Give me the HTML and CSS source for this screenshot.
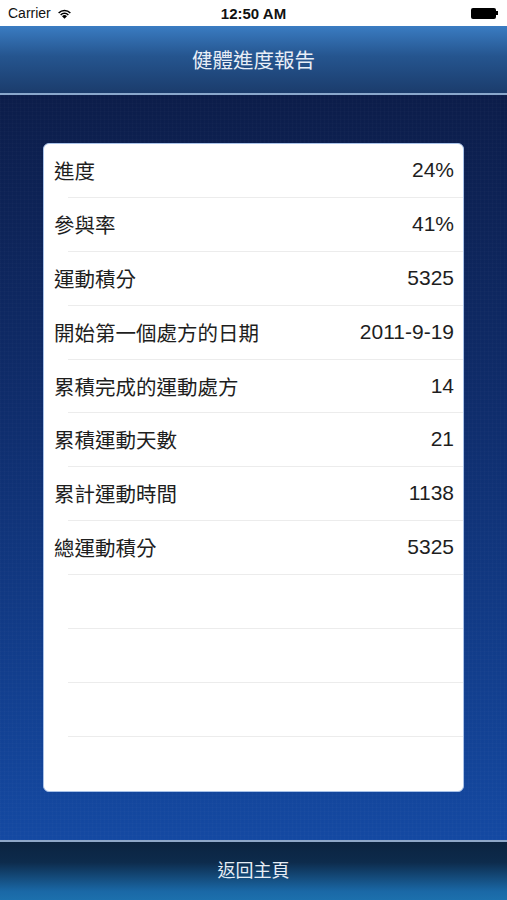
FILE: index.html
```html
<!DOCTYPE html>
<html>

<head>
  <meta name="viewport" content="width=device-width,initial-scale=1.0">
  <meta charset="utf-8">
  <title>健體進度報告</title>
  <link rel="stylesheet" href="styles.css">
</head>

<body>
  <!-- 狀態列 -->
  <div class="status">
    <div class="carrier">Carrier
      <svg class="wifi" width="15" height="11" viewBox="0 0 15 11">
        <path d="M7.5 10.8 L5 8.2 A3.6 3.6 0 0 1 10 8.2 Z" fill="#000" />
        <path d="M3.1 6.4 A6.2 6.2 0 0 1 11.9 6.4 L10.8 7.5 A4.6 4.6 0 0 0 4.2 7.5 Z" fill="#000" />
        <path d="M1.1 4.4 A9 9 0 0 1 13.9 4.4 L12.8 5.5 A7.4 7.4 0 0 0 2.2 5.5 Z" fill="#000" />
      </svg>
    </div>
    <div class="time">12:50 AM</div>
    <div class="battery"><span class="cell"></span><span class="nub"></span></div>
  </div>

  <div class="header">健體進度報告</div>

  <div class="main">
    <div class="card">
      <div class="row"><span>進度</span><span class="num">24%</span></div>
      <div class="row"><span>參與率</span><span class="num">41%</span></div>
      <div class="row"><span>運動積分</span><span class="num">5325</span></div>
      <div class="row"><span>開始第一個處方的日期</span><span class="num">2011-9-19</span></div>
      <div class="row"><span>累積完成的運動處方</span><span class="num">14</span></div>
      <div class="row"><span>累積運動天數</span><span class="num">21</span></div>
      <div class="row"><span>累計運動時間</span><span class="num">1138</span></div>
      <div class="row"><span>總運動積分</span><span class="num">5325</span></div>
      <div class="row"></div>
      <div class="row"></div>
      <div class="row"></div>
      <div class="row last"></div>
    </div>
  </div>

  <div class="footer">返回主頁</div>
</body>

</html>
```

FILE: styles.css
```css
* {
  box-sizing: border-box;
}

body {
  margin: 0;
  width: 507px;
  height: 900px;
  display: flex;
  flex-direction: column;
  font-family: "Liberation Sans", "Noto Sans CJK TC", sans-serif;
  overflow: hidden;
}

/* 狀態列 */
.status {
  height: 26px;
  background-color: #fff;
  display: flex;
  align-items: center;
  justify-content: space-between;
  padding: 0 9px 0 8px;
  position: relative;
}

.carrier {
  font-size: 14px;
  color: #111;
  display: flex;
  align-items: center;
  gap: 6px;
}

.time {
  position: absolute;
  left: 0;
  right: 0;
  text-align: center;
  font-size: 15px;
  font-weight: bold;
  color: #111;
}

.battery {
  display: flex;
  align-items: center;
}

.battery .cell {
  width: 25px;
  height: 11px;
  background-color: #000;
  border-radius: 2px;
}

.battery .nub {
  width: 2px;
  height: 4px;
  background-color: #000;
}

.header {
  height: 69px;
  background: linear-gradient(#3a7cc2, #25558f 45%, #1b3c6c);
  border-bottom: 2px solid #8aa8cc;
  color: #e8eef7;
  font-size: 20.5px;
  text-align: center;
  line-height: 70px;
}

.main {
  flex: 1;
  background:
    repeating-linear-gradient(90deg, rgba(255, 255, 255, 0.015) 0 1px, transparent 1px 4px),
    repeating-linear-gradient(0deg, rgba(255, 255, 255, 0.012) 0 1px, transparent 1px 4px),
    linear-gradient(#0c1d4a, #0f2e6e 45%, #1449a2);
  padding: 48px 43px 0 43px;
}

.card {
  background-color: #fff;
  border: 1px solid #a9c2e8;
  border-radius: 6px;
  height: 649px;
  overflow: hidden;
}

.row {
  height: 53.9px;
  display: flex;
  justify-content: space-between;
  align-items: center;
  padding: 0 9px 2px 10px;
  font-size: 20.5px;
  color: #1e1e1e;
  position: relative;
}

.row .num {
  font-size: 21px;
}

.row::after {
  content: "";
  position: absolute;
  left: 24px;
  right: 0;
  bottom: 0;
  height: 1px;
  background-color: #ececec;
}

.row.last::after {
  display: none;
}

.footer {
  height: 60px;
  border-top: 2px solid #8ea7c9;
  background: linear-gradient(#0b2340, #0d2b4c 35%, #1a68a6 85%, #1c70ad);
  color: #e6edf5;
  font-size: 18px;
  text-align: center;
  line-height: 58px;
}
```
